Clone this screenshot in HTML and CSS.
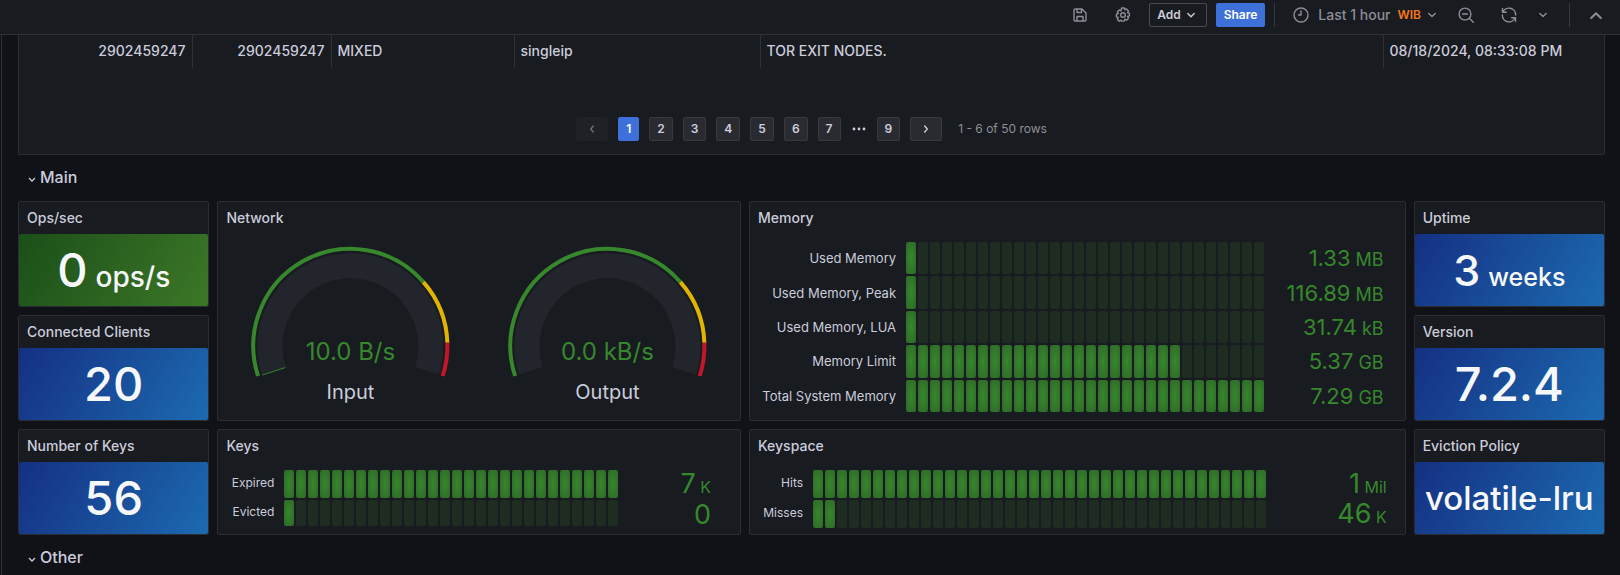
FILE: index.html
```html
<!DOCTYPE html>
<html lang="en">
<head>
  <meta charset="UTF-8">
  <meta name="viewport" content="width=device-width, initial-scale=1.0">
  <title>Redis dashboard</title>
  <link rel="stylesheet" href="styles.css">
</head>
<body>
  <header class="toolbar">
    <button class="icon-button" aria-label="Save dashboard">
      <svg class="icon" viewBox="0 0 16 16"><path d="M2 3.2C2 2.5 2.5 2 3.2 2H10l4 4v6.800c0 .7-.5 1.200-1.200 1.200H3.200C2.500 14 2 13.500 2 12.800z M5 2v3.500h4.500V2.300 M5 14v-4.500h6V14"/></svg>
    </button>
    <button class="icon-button" aria-label="Dashboard settings">
      <svg class="icon" viewBox="0 0 16 16"><circle cx="8" cy="8" r="2.300"/><path d="M6.600 1h2.800l.5 1.900 1.600-1 2 2-1 1.700 1.900.6v2.600l-1.900.7 1 1.700-2 2-1.700-1-.6 1.900H6.600L6 13.200l-1.700 1-2-2 1-1.700-1.900-.7V7.200l1.900-.6-1-1.700 2-2 1.700 1z"/></svg>
    </button>
    <button class="button button-outline">Add
      <svg class="icon" viewBox="0 0 16 16"><path d="M4.800 6.500 8 9.700l3.200-3.200"/></svg>
    </button>
    <button class="button button-primary">Share</button>
    <span class="divider"></span>
    <button class="time-picker">
      <svg class="icon" viewBox="0 0 16 16"><circle cx="8" cy="8" r="7"/><path d="M8 4v4H5.500"/></svg>
      <span class="time-range">Last 1 hour</span>
      <span class="time-zone">WIB</span>
      <svg class="icon" viewBox="0 0 16 16"><path d="M4.800 6.500 8 9.500l3.200-3"/></svg>
    </button>
    <button class="icon-button" aria-label="Zoom out time range">
      <svg class="icon" viewBox="0 0 16 16"><circle cx="7" cy="7" r="5.900"/><path d="M11.300 11.300 15.300 15.300M4.500 7h5"/></svg>
    </button>
    <div class="button-group">
      <button class="icon-button" aria-label="Refresh dashboard">
        <svg class="icon" viewBox="0 0 16 16"><path d="M1.500 1.500v3.800h3.800 M1.900 5.200A6.600 6.600 0 0 1 14.600 8 M14.500 14.500v-3.800h-3.800 M14.100 10.800A6.600 6.600 0 0 1 1.400 8"/></svg>
      </button>
      <button class="icon-button" aria-label="Refresh interval">
        <svg class="icon" viewBox="0 0 16 16"><path d="M4.800 6.500 8 9.500l3.200-3"/></svg>
      </button>
    </div>
    <span class="divider"></span>
    <button class="icon-button" aria-label="Hide toolbar">
      <svg class="icon icon-bold" viewBox="0 0 16 16"><path d="M3.200 11 8 6.200l4.800 4.800"/></svg>
    </button>
  </header>

  <main class="dashboard">
    <section class="panel table-panel">
      <table class="data-table">
        <colgroup>
          <col class="col-start">
          <col class="col-end">
          <col class="col-range">
          <col class="col-type">
          <col>
          <col class="col-time">
        </colgroup>
        <tbody>
          <tr>
            <td class="number">2902459247</td>
            <td class="number">2902459247</td>
            <td>MIXED</td>
            <td>singleip</td>
            <td>TOR EXIT NODES.</td>
            <td>08/18/2024, 08:33:08 PM</td>
          </tr>
        </tbody>
      </table>
      <nav class="pagination" aria-label="Table pages">
        <button class="page page-arrow" aria-label="Previous page" disabled>
          <svg class="icon" viewBox="0 0 16 16"><path d="M9.300 5 6.700 8l2.600 3"/></svg>
        </button>
        <button class="page page-current">1</button>
        <button class="page">2</button>
        <button class="page">3</button>
        <button class="page">4</button>
        <button class="page">5</button>
        <button class="page">6</button>
        <button class="page">7</button>
        <svg class="page-dots" viewBox="0 0 16 16"><circle cx="3" cy="8" r="1.400"/><circle cx="8" cy="8" r="1.400"/><circle cx="13" cy="8" r="1.400"/></svg>
        <button class="page">9</button>
        <button class="page page-arrow" aria-label="Next page">
          <svg class="icon" viewBox="0 0 16 16"><path d="M6.700 5 9.300 8l-2.600 3"/></svg>
        </button>
        <span class="page-summary">1 - 6 of 50 rows</span>
      </nav>
    </section>

    <button class="row-title">
      <svg class="row-icon" viewBox="0 0 10 10"><path d="M2 4l3 3 3-3"/></svg>Main
    </button>

    <div class="panels">
      <section class="panel stat ops">
        <h2 class="panel-title">Ops/sec</h2>
        <div class="stat-body green"><span class="stat-value">0</span><span class="stat-unit">ops/s</span></div>
      </section>

      <section class="panel stat clients">
        <h2 class="panel-title">Connected Clients</h2>
        <div class="stat-body"><span class="stat-value">20</span></div>
      </section>

      <section class="panel stat key-count">
        <h2 class="panel-title">Number of Keys</h2>
        <div class="stat-body"><span class="stat-value">56</span></div>
      </section>

      <section class="panel network">
        <h2 class="panel-title">Network</h2>
        <div class="gauges">
          <svg class="gauge" viewBox="-124 -112 248 186">
            <path class="gauge-track" d="M-76.600 24.900A80.500 80.500 0 1 1 76.600 24.900"/>
            <path class="gauge-value" d="M-65 21.500-88 29"/>
            <path class="gauge-ok" d="M-92.300 30A97 97 0 0 1 73 -63.900"/>
            <path class="gauge-warn" d="M73-63.900A97 97 0 0 1 96.950-3.200"/>
            <path class="gauge-high" d="M96.950-3.200A97 97 0 0 1 92.300 30"/>
            <text class="gauge-text" x="0" y="14">10.0 B/s</text>
            <text class="gauge-label" x="0" y="53">Input</text>
          </svg>
          <svg class="gauge" viewBox="-124 -112 248 186">
            <path class="gauge-track" d="M-76.600 24.900A80.500 80.500 0 1 1 76.600 24.900"/>
            <path class="gauge-ok" d="M-92.300 30A97 97 0 0 1 73 -63.900"/>
            <path class="gauge-warn" d="M73-63.900A97 97 0 0 1 96.950-3.200"/>
            <path class="gauge-high" d="M96.950-3.200A97 97 0 0 1 92.300 30"/>
            <text class="gauge-text" x="0" y="14">0.0 kB/s</text>
            <text class="gauge-label" x="0" y="53">Output</text>
          </svg>
        </div>
      </section>

      <section class="panel memory">
        <h2 class="panel-title">Memory</h2>
        <div class="bars">
          <div class="bar-row">
            <span class="bar-label">Used Memory</span>
            <div class="cells" data-total="30" data-lit="1"></div>
            <span class="bar-value">1.33<small> MB</small></span>
          </div>
          <div class="bar-row">
            <span class="bar-label">Used Memory, Peak</span>
            <div class="cells" data-total="30" data-lit="1"></div>
            <span class="bar-value">116.89<small> MB</small></span>
          </div>
          <div class="bar-row">
            <span class="bar-label">Used Memory, LUA</span>
            <div class="cells" data-total="30" data-lit="1"></div>
            <span class="bar-value">31.74<small> kB</small></span>
          </div>
          <div class="bar-row">
            <span class="bar-label">Memory Limit</span>
            <div class="cells" data-total="30" data-lit="23"></div>
            <span class="bar-value">5.37<small> GB</small></span>
          </div>
          <div class="bar-row">
            <span class="bar-label">Total System Memory</span>
            <div class="cells" data-total="30" data-lit="30"></div>
            <span class="bar-value">7.29<small> GB</small></span>
          </div>
        </div>
      </section>

      <section class="panel keys">
        <h2 class="panel-title">Keys</h2>
        <div class="bars">
          <div class="bar-row">
            <span class="bar-label">Expired</span>
            <div class="cells" data-total="28" data-lit="28"></div>
            <span class="bar-value">7<small> K</small></span>
          </div>
          <div class="bar-row">
            <span class="bar-label">Evicted</span>
            <div class="cells" data-total="28" data-lit="1"></div>
            <span class="bar-value">0</span>
          </div>
        </div>
      </section>

      <section class="panel keyspace">
        <h2 class="panel-title">Keyspace</h2>
        <div class="bars">
          <div class="bar-row">
            <span class="bar-label">Hits</span>
            <div class="cells" data-total="38" data-lit="38"></div>
            <span class="bar-value">1<small> Mil</small></span>
          </div>
          <div class="bar-row">
            <span class="bar-label">Misses</span>
            <div class="cells" data-total="38" data-lit="2"></div>
            <span class="bar-value">46<small> K</small></span>
          </div>
        </div>
      </section>

      <section class="panel stat uptime">
        <h2 class="panel-title">Uptime</h2>
        <div class="stat-body compact"><span class="stat-value">3</span><span class="stat-unit">weeks</span></div>
      </section>

      <section class="panel stat version">
        <h2 class="panel-title">Version</h2>
        <div class="stat-body"><span class="stat-value">7.2.4</span></div>
      </section>

      <section class="panel stat eviction">
        <h2 class="panel-title">Eviction Policy</h2>
        <div class="stat-body"><span class="stat-text">volatile-lru</span></div>
      </section>
    </div>

    <button class="row-title">
      <svg class="row-icon" viewBox="0 0 10 10"><path d="M2 4l3 3 3-3"/></svg>Other
    </button>
  </main>

  <script src="script.js"></script>
</body>
</html>
```

FILE: styles.css
```css
* {
  box-sizing: border-box;
}

body {
  margin: 0;
  height: 100vh;
  display: flex;
  flex-direction: column;
  overflow: hidden;
  background: #111217;
  color: #ccccdc;
  font-family: Inter, "Liberation Sans", sans-serif;
  font-size: 14px;
  line-height: 22px;
}

button {
  font: inherit;
  color: inherit;
  background: none;
  border: none;
  padding: 0;
  cursor: pointer;
}

.icon {
  width: 16px;
  height: 16px;
  fill: none;
  stroke: currentColor;
  stroke-width: 1.4;
  stroke-linecap: round;
  stroke-linejoin: round;
}

.icon-bold {
  stroke-width: 2;
}

/* Toolbar */
.toolbar {
  display: flex;
  justify-content: flex-end;
  align-items: center;
  gap: 9px;
  padding: 3px 7px 7px;
  background: #181b1f;
  border-bottom: 1px solid #2e3036;
  color: #8e8e99;
}

.icon-button {
  display: flex;
  align-items: center;
  justify-content: center;
  width: 34px;
  height: 24px;
}

.button {
  display: flex;
  align-items: center;
  gap: 2px;
  height: 24px;
  padding: 0 8px;
  border-radius: 2px;
  font-size: 12px;
  font-weight: 600;
}

.button-outline {
  padding: 0 7px;
  border: 1px solid #4a4b52;
  color: #ccccdc;
}

.button-primary {
  background: #3d71d9;
  color: #fff;
}

.divider {
  width: 1px;
  height: 24px;
  background: #36383e;
}

.time-picker {
  display: flex;
  align-items: center;
  padding: 0 0 0 9px;
  font-weight: 500;
}

.time-range {
  margin: 0 7px 0 9px;
}

.time-zone {
  margin-right: 3px;
  color: #f8771b;
  font-size: 12px;
  font-weight: 600;
}

.button-group {
  display: flex;
}

/* Dashboard */
.dashboard {
  flex: 1;
  margin-left: 1px;
  padding: 0 15px 0 16px;
  border-left: 1px solid #2e3036;
}

.panel {
  display: flex;
  flex-direction: column;
  min-width: 0;
  background: #181b1f;
  border: 1px solid #2b2d32;
  border-radius: 2px;
}

.panel-title {
  margin: 0;
  padding: 0 8px;
  font-size: 14px;
  font-weight: 500;
  line-height: 32px;
}

.table-panel {
  border-top: none;
  border-radius: 0 0 2px 2px;
}

.data-table {
  width: 100%;
  table-layout: fixed;
  border-collapse: collapse;
}

.data-table td {
  height: 33px;
  padding: 0 6px 2px;
  border-right: 1px solid #2e3036;
  font-weight: 500;
  white-space: nowrap;
}

.data-table td:last-child {
  border-right: none;
}

.data-table .number {
  text-align: right;
}

.col-start {
  width: 173px;
}

.col-end {
  width: 139px;
}

.col-range {
  width: 183px;
}

.col-type {
  width: 246px;
}

.col-time {
  width: 221px;
}

.pagination {
  display: flex;
  justify-content: center;
  align-items: center;
  gap: 10px;
  padding: 49px 0 13px;
  font-size: 12px;
}

.page {
  display: flex;
  align-items: center;
  justify-content: center;
  height: 24px;
  padding: 0 7px;
  background: #2a2b30;
  border: 1px solid #38393f;
  border-radius: 2px;
  font-weight: 600;
}

.page-current {
  background: #3d71d9;
  border-color: #3d71d9;
  color: #fff;
}

.page:disabled {
  background: #1e2125;
  border-color: #1e2125;
  color: #6e6f78;
}

.page-dots {
  width: 16px;
  height: 16px;
  fill: currentColor;
}

.page-summary {
  margin-left: 6px;
  color: #8e8e99;
}

.row-title {
  display: flex;
  align-items: center;
  height: 30px;
  margin: 7px 0 9px;
  padding: 0 9px;
  font-size: 16px;
  font-weight: 500;
}

.row-icon {
  width: 10px;
  height: 10px;
  margin: 4px 3px 0 0;
  fill: none;
  stroke: currentColor;
  stroke-width: 1.3;
}

.panels {
  display: grid;
  grid-template-columns: repeat(24, minmax(0, 1fr));
  grid-template-rows: repeat(3, 106px);
  gap: 8px;
}

.ops {
  grid-area: 1 / 1 / 2 / 4;
}

.clients {
  grid-area: 2 / 1 / 3 / 4;
}

.key-count {
  grid-area: 3 / 1 / 4 / 4;
}

.network {
  grid-area: 1 / 4 / 3 / 12;
}

.keys {
  grid-area: 3 / 4 / 4 / 12;
}

.memory {
  grid-area: 1 / 12 / 3 / 22;
}

.keyspace {
  grid-area: 3 / 12 / 4 / 22;
}

.uptime {
  grid-area: 1 / 22 / 2 / 25;
}

.version {
  grid-area: 2 / 22 / 3 / 25;
}

.eviction {
  grid-area: 3 / 22 / 4 / 25;
}

/* Stat panels */
.stat-body {
  flex: 1;
  display: flex;
  justify-content: center;
  align-items: baseline;
  gap: 8px;
  border-radius: 2px;
  background: linear-gradient(120deg, #153083, #1c6ab0);
  color: #f7f8fa;
  font-weight: 500;
  line-height: 72px;
  white-space: nowrap;
}

.stat-body.green {
  background: linear-gradient(120deg, #1b4f19, #3c7727);
}

.stat-value {
  font-size: 47px;
}

.stat-unit {
  font-size: 28px;
  line-height: 40px;
}

.compact .stat-value {
  font-size: 43px;
}

.compact .stat-unit {
  font-size: 25px;
}

.stat-text {
  font-size: 33px;
}

/* Gauges */
.gauges {
  flex: 1;
  display: flex;
  gap: 8px;
  min-height: 0;
  padding: 0 8px;
}

.gauge {
  flex: 1;
  min-width: 0;
  height: 100%;
  fill: none;
}

.gauge-track {
  stroke: #22252b;
  stroke-width: 25;
}

.gauge-value {
  stroke: #37872d;
  stroke-width: 1;
}

.gauge-ok,
.gauge-warn,
.gauge-high {
  stroke-width: 4;
}

.gauge-ok {
  stroke: #37872d;
}

.gauge-warn {
  stroke: #e0b400;
}

.gauge-high {
  stroke: #c4162a;
}

.gauge-text {
  fill: #37872d;
  font-size: 24px;
  text-anchor: middle;
}

.gauge-label {
  fill: #ccccdc;
  font-size: 20px;
  text-anchor: middle;
}

/* Bar gauges */
.bars {
  flex: 1;
  display: flex;
  flex-direction: column;
  gap: 2px;
  padding: 8px;
}

.bar-row {
  flex: 1;
  display: flex;
  align-items: center;
}

.bar-label {
  padding-right: 10px;
  font-size: 13px;
  text-align: right;
  white-space: nowrap;
}

.cells {
  flex: 1;
  align-self: stretch;
  display: flex;
  gap: 2px;
}

.cell {
  flex: 1;
  border-radius: 2px;
  background: #1f2c21;
}

.cell.lit {
  background: radial-gradient(#37872d, #2e6828);
}

.bar-value {
  padding-top: 2px;
  color: #37872d;
  font-size: 22px;
  text-align: right;
  white-space: nowrap;
}

.bar-value small {
  font-size: 18px;
}

.memory .bar-label {
  width: 148px;
}

.memory .bar-value {
  width: 133px;
  padding-right: 13px;
}

.keys .bar-label {
  width: 58px;
}

.keys .bar-value {
  width: 114px;
  padding-right: 21px;
}

.keyspace .bar-label {
  width: 55px;
}

.keyspace .bar-value {
  width: 130px;
  padding-right: 10px;
}

.keys .bar-label,
.keyspace .bar-label {
  padding-bottom: 2px;
  font-size: 12px;
}

.keys .bar-value,
.keyspace .bar-value {
  padding-top: 3px;
  font-size: 27px;
}

.keys .bar-value small,
.keyspace .bar-value small {
  font-size: 16px;
}
```

FILE: script.js
```javascript
// fill each bar with its cells
document.querySelectorAll(".cells").forEach(function (bar) {
  for (let i = 0; i < Number(bar.dataset.total); i++) {
    const cell = document.createElement("span");
    cell.className = i < Number(bar.dataset.lit) ? "cell lit" : "cell";
    bar.appendChild(cell);
  }
});
```
